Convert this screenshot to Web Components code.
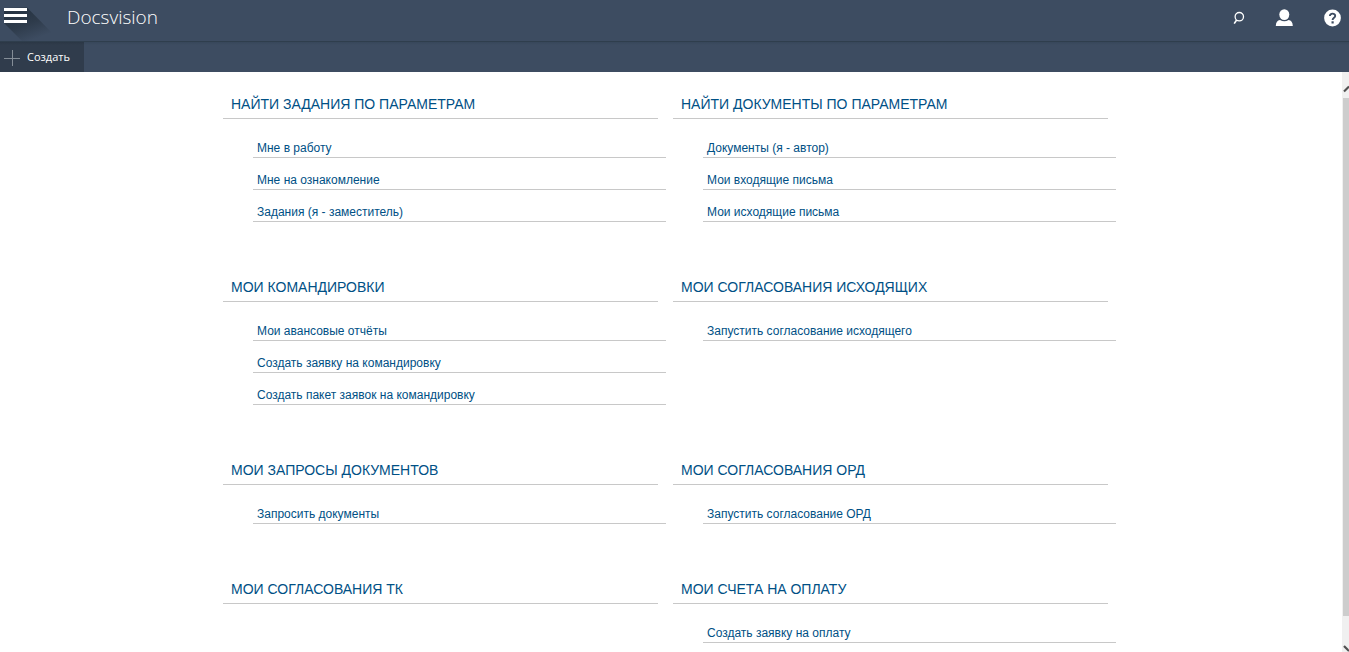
<!DOCTYPE html>
<html lang="ru">
<head>
<meta charset="utf-8">
<title>Docsvision</title>
<style>
  body { margin: 0; background: #fff; font-family: "Liberation Sans", Arial, sans-serif; }
</style>
</head>
<body>
<dv-shell>
  <dv-topbar slot="top" heading="Docsvision"></dv-topbar>
  <dv-toolbar slot="top" label="Создать"></dv-toolbar>
  <dv-section heading="Найти задания по параметрам">
    <dv-link>Мне в работу</dv-link>
    <dv-link>Мне на ознакомление</dv-link>
    <dv-link>Задания (я - заместитель)</dv-link>
  </dv-section>
  <dv-section heading="Найти документы по параметрам">
    <dv-link>Документы (я - автор)</dv-link>
    <dv-link>Мои входящие письма</dv-link>
    <dv-link>Мои исходящие письма</dv-link>
  </dv-section>
  <dv-section heading="Мои командировки">
    <dv-link>Мои авансовые отчёты</dv-link>
    <dv-link>Создать заявку на командировку</dv-link>
    <dv-link>Создать пакет заявок на командировку</dv-link>
  </dv-section>
  <dv-section heading="Мои согласования исходящих">
    <dv-link>Запустить согласование исходящего</dv-link>
  </dv-section>
  <dv-section heading="Мои запросы документов">
    <dv-link>Запросить документы</dv-link>
  </dv-section>
  <dv-section heading="Мои согласования ОРД">
    <dv-link>Запустить согласование ОРД</dv-link>
  </dv-section>
  <dv-section heading="Мои согласования ТК"></dv-section>
  <dv-section heading="Мои счета на оплату">
    <dv-link>Создать заявку на оплату</dv-link>
  </dv-section>
</dv-shell>

<script>
class DvElement extends HTMLElement {
  connectedCallback() {
    if (!this.shadowRoot) this.attachShadow({ mode: 'open' }).innerHTML = this.render();
  }
}

customElements.define('dv-shell', class extends DvElement {
  render() {
    return `<style>
      :host { display: flex; flex-direction: column; height: 100vh; overflow: hidden; }
      .body { flex: 1; min-height: 0; display: flex; }
      main { flex: 1; overflow: hidden; }
      .grid { display: grid; grid-template-columns: 1fr 1fr; column-gap: 15px; box-sizing: border-box;
        max-width: 896px; margin: 0 auto; padding: 16px 11px 0 0; }
    </style>
    <slot name="top"></slot>
    <div class="body"><main><div class="grid"><slot></slot></div></main><dv-scrollbar></dv-scrollbar></div>`;
  }
});

customElements.define('dv-topbar', class extends DvElement {
  render() {
    return `<style>
      :host { display: flex; align-items: flex-start; height: 41px; background: #3d4c61; color: #fff;
        border-bottom: 1px solid #2f3e4d; }
      button { padding: 0; border: 0; background: none; display: block; }
      svg { display: block; }
      h1 { flex: 1; margin: 0 0 0 7px; font: 300 19px/34px "Open Sans", "Segoe UI", sans-serif; }
      .actions { display: flex; gap: 30px; padding: 8px 8px 0 0; }
    </style>
    <button aria-label="Меню"><svg width="60" height="41" viewBox="0 0 60 41">
      <defs><linearGradient id="g" gradientUnits="userSpaceOnUse" x1="20" y1="8" x2="32" y2="40">
        <stop offset="0" stop-color="#263342"/><stop offset=".5" stop-color="#2e3b4b"/><stop offset="1" stop-color="#3d4c61"/></linearGradient></defs>
      <path d="M27 7.5L60 41H22L4 23V8z" fill="url(#g)"/>
      <path d="M4 8h23v3H4zM4 14h23v3H4zM4 20h23v3H4z" fill="#fff"/></svg></button>
    <h1>${this.getAttribute('heading')}</h1>
    <div class="actions">
      <button aria-label="Поиск"><svg width="18" height="19" viewBox="-3 0 18 19">
        <circle cx="9.3" cy="8.7" r="4.2" fill="none" stroke="#fff" stroke-width="1.3"/>
        <path d="M6.6 12L4.2 15.6" stroke="#fff" stroke-width="1.6"/></svg></button>
      <button aria-label="Профиль"><svg width="18" height="19" viewBox="0 0 18 19">
        <ellipse cx="9.3" cy="6.6" rx="5" ry="5.4" fill="#fff"/>
        <path d="M.8 18c0-3.8 1.7-5.8 4.2-6.1 2.6 1.7 6 1.7 8.6 0 2.5.3 4.2 2.3 4.2 6.1z" fill="#fff"/></svg></button>
      <button aria-label="Справка"><svg width="18" height="19" viewBox="0 0 18 19">
        <circle cx="9.5" cy="10" r="8.400" fill="#fff"/>
        <path d="M6.900 8c0-3.300 5.400-3.100 5.300-.1 0 1.900-2.600 1.900-2.600 4.100" fill="none" stroke="#3d4c61" stroke-width="1.900"/>
        <rect x="8.500" y="13.300" width="2.200" height="2.200" fill="#3d4c61"/></svg></button>
    </div>`;
  }
});

customElements.define('dv-toolbar', class extends DvElement {
  render() {
    return `<style>
      :host { display: flex; height: 30px; background: linear-gradient(#37475a, #3d4c61 3px); }
      button { display: flex; align-items: center; gap: 7px; width: 84px; padding: 0 0 0 4px; border: 0;
        background: linear-gradient(#2b3745, #303c4c 3px); color: #fff;
        font: 11px/30px "Open Sans", "Segoe UI", sans-serif; white-space: nowrap; }
      svg { flex: none; }
    </style>
    <button><svg width="16" height="24" viewBox="0 0 16 24" aria-hidden="true">
      <path d="M8.500 5v16M0 13.500h16" stroke="#848d97" stroke-width="1"/></svg>${this.getAttribute('label')}</button>`;
  }
});

customElements.define('dv-section', class extends DvElement {
  render() {
    return `<style>
      :host { display: block; padding-bottom: 49px; color: #005085; }
      h2 { margin: 0; padding: 0 8px; height: 30px; border-bottom: 1px solid #c8c8c8;
        font-size: 14px; font-weight: 400; line-height: 32px; text-transform: uppercase; }
      .items { margin: 7px -8px 0 30px; }
    </style>
    <h2>${this.getAttribute('heading')}</h2>
    <div class="items"><slot></slot></div>`;
  }
});

customElements.define('dv-link', class extends DvElement {
  render() {
    return `<style>
      :host { display: block; border-bottom: 1px solid #c8c8c8; }
      a { display: block; padding: 13px 4px 0; font-size: 12px; line-height: 18px; color: inherit; text-decoration: none; }
    </style>
    <a href="#"><slot></slot></a>`;
  }
});

customElements.define('dv-scrollbar', class extends DvElement {
  render() {
    return `<style>
      :host { display: grid; grid-template-rows: 26px 1fr 36px; width: 7px; background: #f0f0f0; overflow: hidden; }
      .thumb { margin-left: 1px; background: #cdcdcd; }
      svg { display: block; align-self: end; }
    </style>
    <svg width="7" height="26" viewBox="0 0 7 26" aria-hidden="true"><path d="M2 19.500l5-5" stroke="#505050" stroke-width="2.200"/></svg>
    <div class="thumb"></div>
    <svg width="7" height="36" viewBox="0 0 7 36" aria-hidden="true"><path d="M2 30l5 5" stroke="#505050" stroke-width="2.200"/></svg>`;
  }
});
</script>
</body>
</html>
